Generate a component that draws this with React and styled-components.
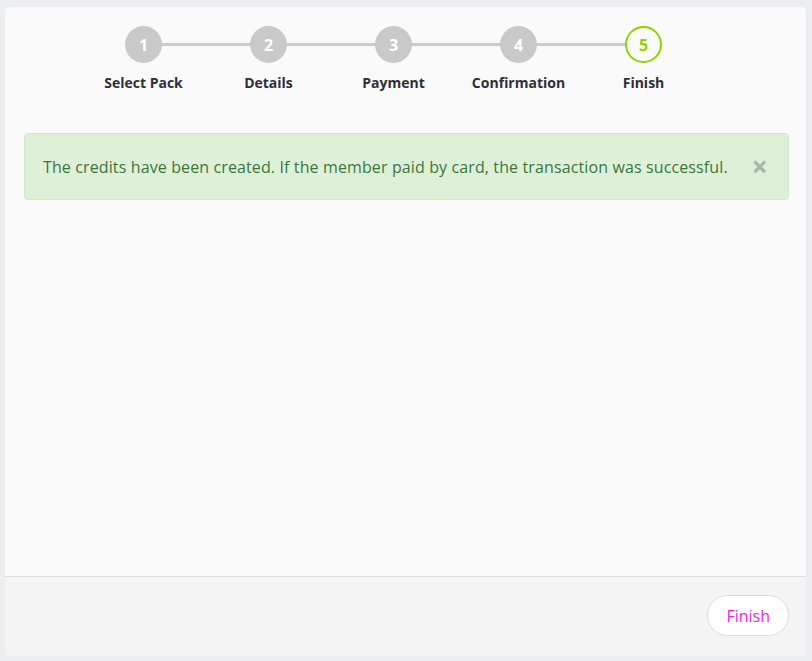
import styled, { createGlobalStyle } from "styled-components";

const Global = createGlobalStyle`
    body {
        margin: 0;
        background: #ecedf1;
        font-family: "Open Sans", "Liberation Sans", sans-serif;
    }
`;

const Page = styled.div`
    padding: 7px 6px 5px 5px;
`;

const Card = styled.div`
    background: #fafafa;
    border-radius: 5px;
    height: 649px;
    display: flex;
    flex-direction: column;
    overflow: hidden;
`;

const Body = styled.div`
    flex: 1;
    padding: 19px 17px 0 19px;
`;

const Steps = styled.div`
    display: flex;
    padding-left: 57px;
`;

const Step = styled.div`
    width: 125px;
    display: flex;
    flex-direction: column;
    align-items: center;
    position: relative;

    &:not(:first-child)::before {
        content: "";
        position: absolute;
        top: 17px;
        right: 50%;
        width: 125px;
        height: 3px;
        background: #cbcbcb;
    }
`;

const Circle = styled.div`
    position: relative;
    z-index: 1;
    width: 37px;
    height: 37px;
    box-sizing: border-box;
    border-radius: 50%;
    display: flex;
    align-items: center;
    justify-content: center;
    font-weight: 700;
    font-size: 16px;
    background: ${p => (p.$active ? "#fafafa" : "#c9c9c9")};
    border: ${p => (p.$active ? "2px solid #8fd400" : "none")};
    color: ${p => (p.$active ? "#8fd400" : "#fff")};
`;

const Label = styled.div`
    margin-top: 10px;
    font-size: 14px;
    font-weight: 700;
    color: #2e2e38;
    white-space: nowrap;
`;

const Alert = styled.div`
    margin-top: 41px;
    background: #dff0d8;
    border: 1px solid #d3e8c6;
    border-radius: 4px;
    color: #3c763d;
    font-size: 16px;
    letter-spacing: 0.12px;
    height: 67px;
    box-sizing: border-box;
    padding: 0 20px 0 18px;
    display: flex;
    align-items: center;
    justify-content: space-between;
`;

const Close = styled.span`
    color: #a9b3a6;
    font-size: 28px;
    font-weight: 700;
    line-height: 1;
    margin-top: -2px;
`;

const Footer = styled.div`
    height: 80px;
    box-sizing: border-box;
    background: #f4f4f4;
    border-top: 1px solid #dcdcdc;
    display: flex;
    align-items: center;
    justify-content: flex-end;
    padding: 0 17px 0 0;
`;

const Button = styled.button`
    font-family: inherit;
    font-size: 16px;
    color: #ee1fe0;
    background: #fff;
    border: 1px solid #dcdcdc;
    border-radius: 21px;
    height: 41px;
    padding: 0 18px;
    margin-top: -2px;
`;

const steps = ["Select Pack", "Details", "Payment", "Confirmation", "Finish"];

export default function App() {
    return (
        <Page>
            <Global />
            <Card>
                <Body>
                    <Steps>
                        {steps.map((s, i) => (
                            <Step key={s}>
                                <Circle $active={i === 4}>{i + 1}</Circle>
                                <Label>{s}</Label>
                            </Step>
                        ))}
                    </Steps>
                    <Alert>
                        <span>The credits have been created. If the member paid by card, the transaction was successful.</span>
                        <Close>×</Close>
                    </Alert>
                </Body>
                <Footer>
                    <Button>Finish</Button>
                </Footer>
            </Card>
        </Page>
    );
}
